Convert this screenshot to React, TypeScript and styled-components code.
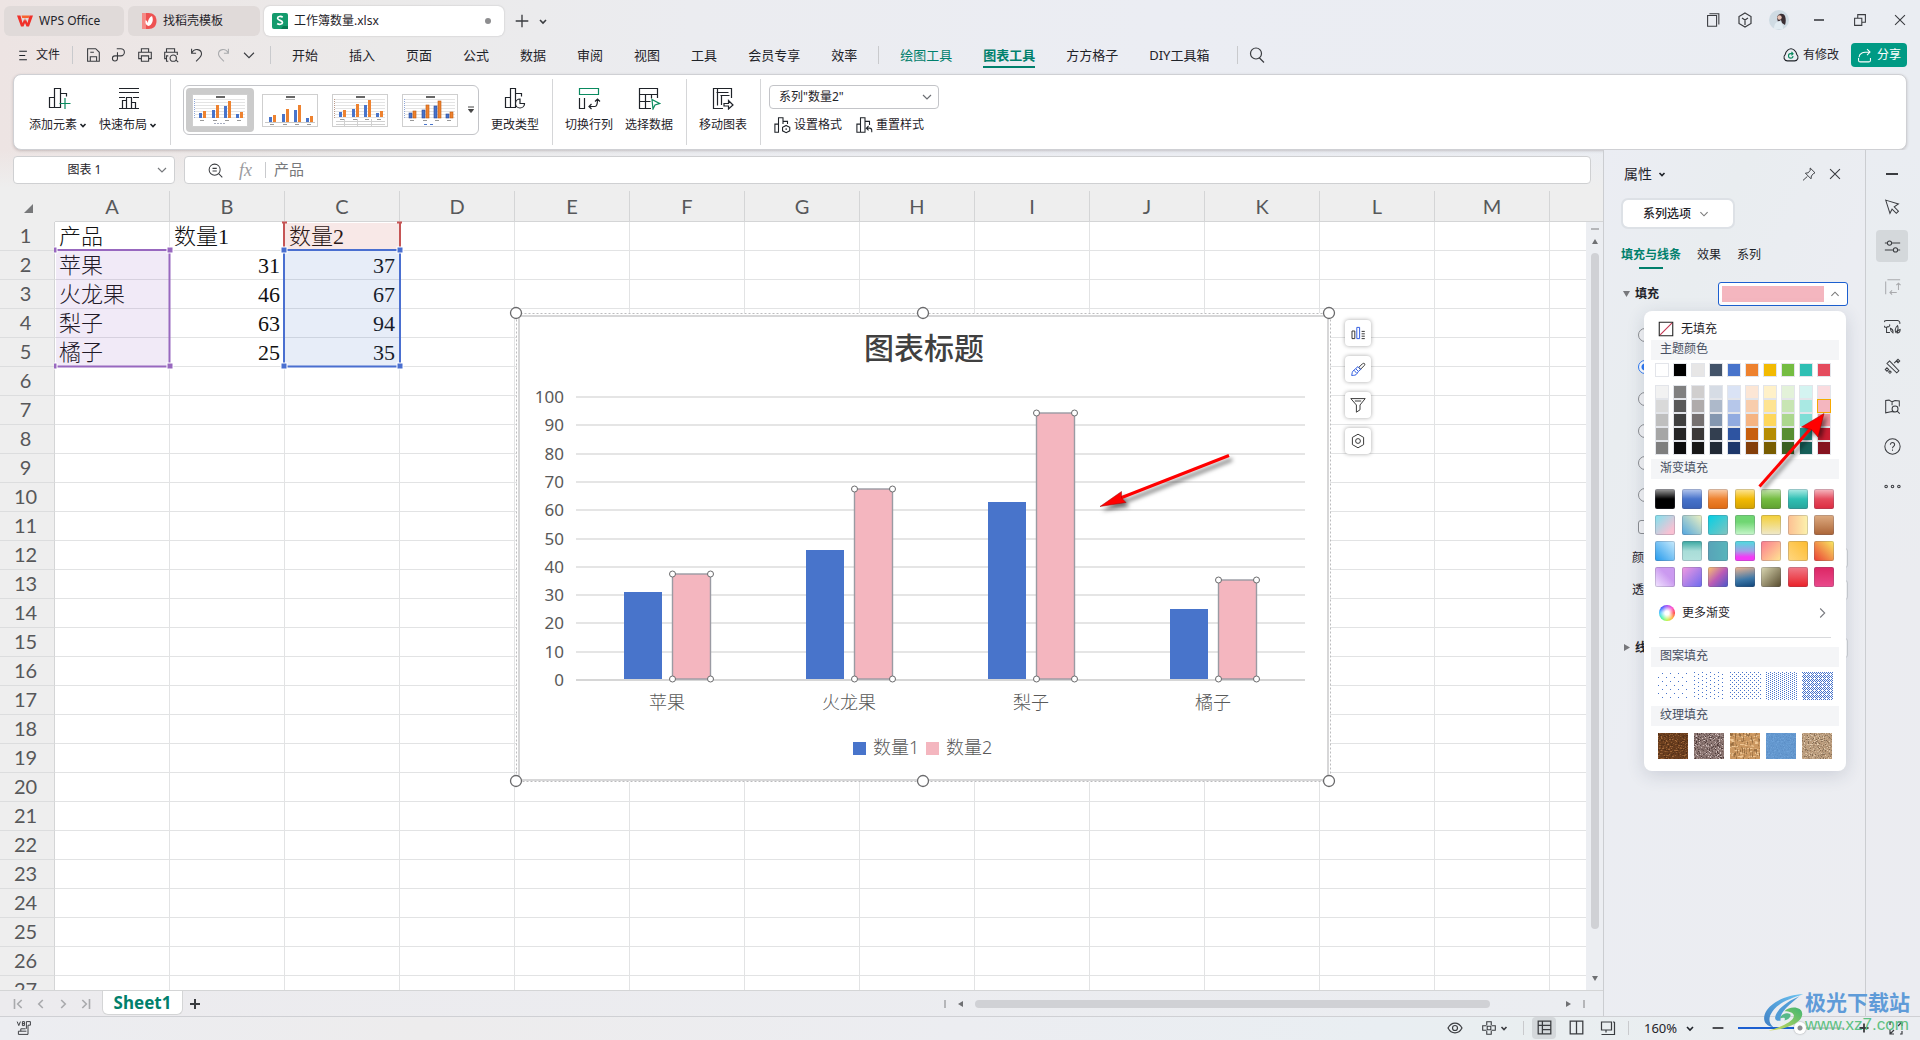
import React from "react";
import styled, { createGlobalStyle, css } from "styled-components";

const Global = createGlobalStyle`
  *, *::before, *::after { box-sizing: border-box; }
  html, body, #root { height: 100%; }
  body {
    margin: 0;
    overflow: hidden;
    font-family: "Noto Sans", "Noto Sans CJK SC", sans-serif;
    font-size: 12px;
    line-height: 18px;
    color: #1f2329;
  }
  button, select, input {
    font: inherit;
    color: inherit;
    margin: 0;
    padding: 0;
    border: 0;
    background: none;
  }
  svg { display: block; flex: none; }
`;

/* ---------- icons ---------- */

const Stroke = styled.svg`
  fill: none;
  stroke: currentColor;
  stroke-width: 1.2;
`;

const shapes: Record<string, React.ReactNode> = {
  burger: <path d="M5 5h9M5 10h7M5 15h9" />,
  save: <path d="M4 3h9l4 4v10H4zM7 17v-5h7v5M7 7h4" />,
  pdf: <path d="M7.500 3H12a4 4 0 0 1 0 8H5.500a2.800 2.800 0 1 0 2.800 2.800V7" />,
  print: <path d="M6 7V3h8v4M6 14H3V7h14v7h-3M6 11h8v6H6z" />,
  preview: <path d="M5 7V3h9v4M5 14H3V7h14v3M7 17H5v-6h2M16 16l2 2M12.500 10a3.500 3.500 0 1 0 0 7 3.500 3.500 0 1 0 0-7z" />,
  undo: <path d="M4 3v5h5M4 8c3-6 11-5 11 1 0 3-3 5-6 8" />,
  redo: <path d="M16 3v5h-5M16 8c-3-6-11-5-11 1 0 3 3 5 6 8" />,
  down: <path d="M6 8l4 4 4-4" />,
  menuDown: <path d="M4.500 7.500l5.500 5.500 5.500-5.500" />,
  up: <path d="M6 12l4-4 4 4" />,
  right: <path d="M8 5l5 5-5 5" />,
  smallDown: <path d="M7 9l3 3 3-3" strokeWidth="1.6" />,
  plus: <path d="M10 3v14M3 10h14" strokeWidth="1.5" />,
  plusSmall: <path d="M10 5v10M5 10h10" strokeWidth="2" />,
  minus: <path d="M5 10h10" strokeWidth="1.6" />,
  minusBold: <path d="M4 10h12" strokeWidth="2" />,
  close: <path d="M4.500 4.500l11 11M15.500 4.500l-11 11" />,
  search: <path d="M9 3a5.500 5.500 0 1 0 0 11 5.500 5.500 0 1 0 0-11zM12.500 13L17 17.500" />,
  zoomOut: <path d="M9 2.500a6.500 6.500 0 1 0 0 13 6.500 6.500 0 1 0 0-13zM13.500 13.500L18 18M6.500 7.500h5M6.500 10.500h5" />,
  windows: <path d="M4 5h10v12H4zM6 3h10.500v12" />,
  cube: <path d="M10 3l6 3.500v7L10 17l-6-3.500v-7zM7 8l3 2 3-2M10 10v5" />,
  restore: <path d="M4 8h8v8H4zM7.500 8V4H16v8.500h-4" />,
  cloud: (
    <>
      <path d="M6 16.500a4 4 0 0 1-2.500-7C4.500 5 8 3 10 3s5.500 2 6.500 6.500a4 4 0 0 1-2.500 7z" />
      <path d="M12 8.500H9.500A2.500 2.500 0 1 0 12.200 11M10.500 6.500l1.800 2-1.800 1.800" stroke="#0a8a5f" />
    </>
  ),
  share: <path d="M3 13v2.500a2 2 0 0 0 2 2h10a2 2 0 0 0 2-2V13M3.500 12C4 7 8 6 16.500 6M13 2.500L16.500 6 13 9.500" />,
  pin: <path d="M11.500 2.500l6 6-2 1-2.500 3-.5 3.500-7-7 3.500-.5 2.500-3zM8 13l-5.500 5" />,
  cursor: <path d="M2 2.500l15 4.500-5 3.500 5 5-2.500 2.500-5-5-2.500 5z" />,
  sliders: <path d="M1 6h3M9 6h10M6.500 3.500a2.500 2.500 0 1 0 0 5 2.500 2.500 0 1 0 0-5zM1 14h10M16 14h3M13.500 11.500a2.500 2.500 0 1 0 0 5 2.500 2.500 0 1 0 0-5z" />,
  convert: <path d="M2 4v15M4 2h15M17 6v8M14.500 8.500L17 6l2.500 2.500M15 17H7M9.500 14.500L7 17l2.500 2.500" />,
  chartImg: <path d="M7 17H3v-6a4 4 0 0 1 0-8h13a3 3 0 0 1 2.500 4M6.500 7.500a2 2 0 0 1-3 2.500M10.500 17.500C8 16 7.500 14 7.500 12c2.500 1 3.500 3 3 5.500zM14 17c-1.500-3-.5-6 2-8 1 3 .5 6-2 8zM15.500 17.500c0-2 1-3.500 3.500-4 0 2.500-1 4-3.500 4z" />,
  wand: <path d="M6.500 3.500L17.500 15 15 17.500 3.500 6.500zM12 6l3-3 1.500 1.500M3.500 11.500l2 2-2 2-2-2zM7 15l1.500 1.500L7 18l-1.500-1.500zM16.500 1.500L18.500 3.500 16.500 5.500 14.500 3.500z" />,
  book: <path d="M9.500 16L2 17.500V3l4-.5 3.500 2L13 3l5 .5V10M9.500 16l2 .5M9.500 4.500v4M13 9.500a3.500 3.500 0 1 0 0 7 3.500 3.500 0 1 0 0-7zM15.500 15.500L18.500 18.500" />,
  help: <path d="M10 1a9 9 0 1 0 0 18 9 9 0 1 0 0-18zM7.500 8c0-3.500 5-3.500 5 0 0 1.800-2.500 2-2.500 4M10 13.500v1.500" />,
  more: <path d="M2.500 8.500a1.500 1.500 0 1 0 0 3 1.500 1.500 0 1 0 0-3zM10 8.500a1.500 1.500 0 1 0 0 3 1.500 1.500 0 1 0 0-3zM17.500 8.500a1.500 1.500 0 1 0 0 3 1.500 1.500 0 1 0 0-3z" />,
  first: <path d="M5 4.500v11M13 5.500L8.500 10l4.500 4.500" strokeWidth="1.8" />,
  prev: <path d="M12 5.500L7.500 10l4.500 4.500" strokeWidth="1.8" />,
  next: <path d="M8 5.500l4.500 4.500L8 14.500" strokeWidth="1.8" />,
  last: <path d="M15 4.500v11M7 5.500l4.500 4.500L7 14.500" strokeWidth="1.8" />,
  eye: <path d="M3 10C6.500 3.500 13.500 3.500 17 10 13.500 16.500 6.500 16.500 3 10zM10 7.500a2.500 2.500 0 1 0 0 5 2.500 2.500 0 1 0 0-5z" />,
  pan: <path d="M7.500 7V3h5v4M7.500 13v4h5v-4M7 7.500H3v5h4M13 7.500h4v5h-4M8 8h4v4H8z" />,
  sheetView: <path d="M4 4h12v12H4zM4 8h12M8 4v12M8 12h8" />,
  pageView: <path d="M4 4h12v12H4zM10 4v12" />,
  layoutView: <path d="M3.500 4h10v8h-10zM16.500 4v12.500h-13M16.500 4H15M8 14.500v-2" />,
  full: <path d="M12 4h4v4M16 4l-4 4M8 16H4v-4M4 16l4-4M4 7V4h2M16 13v3h-2" />,
  barsPanel: (
    <>
      <path d="M2.500 7.500h3.500V17H2.500z" />
      <path d="M8.500 3h3.500v14H8.500z" stroke="#2f5be0" />
      <path d="M14.500 8h4M14.500 11h4M14.500 14h4M14.500 17h4" />
    </>
  ),
  brush: (
    <>
      <path d="M11 8l4.500-4.500c2-1.500 4 0 2.500 2L13 10.500z" />
      <path d="M2 18c1-2 0-5 3-6.500l2-2 3.500 3.500-2 3C7.500 18 5 18 2 18zM7 9.500L10 7l3.500 3.500-3 2.500M5 11.500l3.500 4" stroke="#2f5be0" />
    </>
  ),
  funnel: <path d="M1 2h18l-6.500 8v6l-4.500 3v-9zM6 5h8" />,
  hexagon: <path d="M10 1.500l7 4v9l-7 4-7-4v-9zM10 7a3 3 0 1 0 0 6 3 3 0 1 0 0-6z" />,
  noFill: (
    <>
      <path d="M2.500 2.500h15v15h-15z" stroke="#222" />
      <path d="M3.500 16.500l13-13" stroke="#c2334f" />
    </>
  ),
  vb: <path d="M1.500 2l2 5 2-5M8 2v5h2.500V2zM8 4.500h2.500M13 2h5v4.500h-3V18H3v-4h10M6 14v-3h6M13 2v9" />,
  addElement: (
    <>
      <path d="M2.500 11.500h5v10h-5zM7.500 21.500h6V2.500h-6v9M13.500 7.500h6v3" />
      <path d="M18 12v11M12.500 17.500h11" stroke="#0a8a5f" />
    </>
  ),
  quickLayout: <path d="M2 2.500h20M2 6.500h20M2 11.500h6M16 11.500h6M2 22.500h20M5.500 22.500v-8h4M9.500 22.500v-11h5v11M14.500 16.500h4v6" />,
  changeType: <path d="M2.500 11.500h5v10h-5zM7.500 21.500h5V2.500h-5v9M12.500 7.500h6v3M17 13a4.500 4.500 0 1 0 4.500 4.500H17z" />,
  swap: (
    <>
      <path d="M2.500 2.500h19v6h-19z" stroke="#0a8a5f" />
      <path d="M2.500 12v10.500h5V12M12 20.500h6c2 0 2.500-2 2.500-7.500M14.500 18L12 20.500l2.500 2.500M18 15.500l2.500-2.500 2.500 2.500" />
    </>
  ),
  selectData: (
    <>
      <path d="M20.500 12V2.500h-18v20H14M2.500 8.500h18M8.500 8.500v14M2.500 15.500h11M14.500 8.500v4" />
      <path d="M15 13.500l7.500 4-4.500 1.500-2 4z" stroke="#0a8a5f" />
    </>
  ),
  moveChart: <path d="M12 22.500H2.500v-20h18V12M5.500 6.500h12M6.500 3v16.500M9.500 9.500h9M10.500 9.500V19M13 17.500h4.500v-3l4.500 4.500-4.500 4v-3H13z" />,
  setFormat: <path d="M1 9h4v9H1zM5 18V2h5v7M10 6h5v3M13.500 10.500l4 2v4l-4 2-4-2v-4zM13.500 13.500v2" />,
  resetStyle: <path d="M1 9h4v9H1zM5 18h5V2H5v7M10 6h5v4M12 13.500h3a2.500 2.500 0 0 1 2.500 2.500v2M14 11l-2.500 2.500L14 16" />,
};

function Icon({ name, size = 20, box = 20 }: { name: string; size?: number; box?: number }) {
  return (
    <Stroke width={size} height={size} viewBox={`0 0 ${box} ${box}`} aria-hidden="true">
      {shapes[name]}
    </Stroke>
  );
}

/* ---------- frame ---------- */

const App_ = styled.div`
  height: 100vh;
  display: flex;
  flex-direction: column;
  position: relative;
  overflow: hidden;
  background: linear-gradient(90deg, #ede4e3 0, #ebeaea 20%, #ebecf0 36%, #ebedf3 60%, #eaedf2 100%);
`;

const IconButton = styled.button<{ $w?: number; $h?: number; $faint?: boolean; $active?: boolean }>`
  width: ${(p) => p.$w ?? 26}px;
  height: ${(p) => p.$h ?? 24}px;
  display: flex;
  align-items: center;
  justify-content: center;
  border-radius: 4px;
  color: ${(p) => (p.$faint ? "#a9aaad" : "#3a3c40")};
  background: ${(p) => (p.$active ? "#d4d8db" : "none")};
`;

const Rule = styled.span<{ $h?: number }>`
  width: 1px;
  height: ${(p) => p.$h ?? 18}px;
  background: #c9cacd;
  flex: none;
`;

const Spacer = styled.div`
  flex: 1;
`;

/* ---------- title bar ---------- */

const TitleBar = styled.header`
  display: flex;
  align-items: center;
  gap: 4px;
  height: 36px;
  padding: 6px 0 0 4px;
`;

const DocTab = styled.button<{ $w: number; $active?: boolean }>`
  width: ${(p) => p.$w}px;
  height: 30px;
  padding: 0 13px 0 ${(p) => (p.$active ? 8 : 13)}px;
  display: flex;
  align-items: center;
  gap: 6px;
  border-radius: 6px;
  background: ${(p) => (p.$active ? "#fff" : "#e0dad9")};
  box-shadow: ${(p) => (p.$active ? "0 0 2px #b9b9bb" : "none")};
`;

const Dot = styled.span`
  width: 6px;
  height: 6px;
  border-radius: 50%;
  background: #8d8d8f;
  margin-left: auto;
`;

const WindowTools = styled.div`
  display: flex;
  align-items: center;
  padding-bottom: 2px;
`;

/* ---------- menu row ---------- */

const MenuRow = styled.nav`
  display: flex;
  align-items: center;
  height: 38px;
  padding: 0 13px 0 15px;
`;

const FileButton = styled.button`
  display: flex;
  align-items: center;
  gap: 4px;
  width: 57px;
`;

const QuickTools = styled.div`
  display: flex;
  padding: 0 8px 0 7px;
`;

const MenuItems = styled.div<{ $end: number }>`
  display: flex;
  align-items: center;
  gap: 31px;
  padding: 0 ${(p) => p.$end}px 0 21px;
`;

const MenuItem = styled.button<{ $tone?: "green" | "current" }>`
  font-size: 13px;
  line-height: 22px;
  white-space: nowrap;
  border-top: 2px solid transparent;
  border-bottom: 2px solid transparent;
  ${(p) => p.$tone && css`color: #00806c;`}
  ${(p) => p.$tone === "current" && css`
    font-weight: 700;
    border-bottom-color: #00806c;
  `}
`;

const Unsaved = styled.button`
  display: flex;
  align-items: center;
  gap: 3px;
  margin-right: 12px;
`;

const ShareButton = styled.button`
  display: flex;
  align-items: center;
  gap: 4px;
  height: 24px;
  padding: 0 6px 0 5px;
  border-radius: 4px;
  background: #009a84;
  color: #fff;
`;

/* ---------- ribbon ---------- */

const Ribbon = styled.section`
  display: flex;
  align-items: stretch;
  height: 76px;
  margin: 0 13px;
  padding: 4px 0;
  background: #fff;
  border: 1px solid #cfd0d4;
  border-radius: 8px;
  box-shadow: 0 1px 3px rgba(60, 40, 40, 0.22);
`;

const Group = styled.div<{ $pad?: string; $gap?: number }>`
  display: flex;
  gap: ${(p) => p.$gap ?? 12}px;
  padding: ${(p) => p.$pad ?? "0 13px 0 12px"};
  & + & {
    border-left: 1px solid #d5d6d8;
  }
`;

const BigButton = styled.button`
  display: flex;
  flex-direction: column;
  align-items: center;
  gap: 6px;
  padding-top: 7px;
  white-space: nowrap;
`;

const WithArrow = styled.span`
  display: flex;
  align-items: center;
`;

const Caret = () => (
  <Stroke width="12" height="8" viewBox="0 0 12 8" aria-hidden="true">
    <path d="M3.500 3L6 5.500 8.500 3" strokeWidth="1.600" />
  </Stroke>
);

const Gallery = styled.div`
  display: flex;
  align-items: center;
  gap: 2px;
  width: 296px;
  height: 50px;
  margin-top: 6px;
  padding: 0 2px;
  border: 1px solid #c3c4c8;
  border-radius: 6px;
`;

const ThumbButton = styled.button<{ $active?: boolean }>`
  width: 68px;
  height: 44px;
  display: grid;
  place-items: center;
  border-radius: 4px;
  background: ${(p) => (p.$active ? "#cbcbcb" : "none")};
`;

const SeriesTools = styled.div`
  display: flex;
  flex-direction: column;
  gap: 7px;
  padding-top: 6px;
`;

const SelectBox = styled.label`
  position: relative;
  display: block;
  color: #6b6e73;
  svg {
    position: absolute;
    right: 2px;
    top: 2px;
    pointer-events: none;
  }
`;

const SeriesSelect = styled.select`
  appearance: none;
  width: 170px;
  height: 24px;
  padding: 0 24px 0 9px;
  border: 1px solid #c3c4c8;
  border-radius: 4px;
  background: #fff;
  color: #1f2329;
`;

const SmallTools = styled.div`
  display: flex;
  gap: 14px;
`;

const SmallTool = styled.button`
  display: flex;
  align-items: center;
  gap: 2px;
  height: 18px;
  line-height: 18px;
  padding-left: 5px;
  & + & {
    padding-left: 0;
  }
`;

/* ---------- workspace ---------- */

const Workspace = styled.div`
  flex: 1;
  min-height: 0;
  display: flex;
`;

const SheetColumn = styled.main`
  flex: 1;
  min-width: 0;
  display: flex;
  flex-direction: column;
  background: linear-gradient(180deg, rgba(238, 238, 238, 0) 0, #eee 38px);
`;

const FormulaRow = styled.div`
  display: flex;
  gap: 9px;
  padding: 6px 12px 7px 13px;
`;

const fieldFrame = css`
  height: 28px;
  border: 1px solid #cfd0d2;
  border-radius: 4px;
  background: #fff;
`;

const NameBox = styled.label`
  ${fieldFrame}
  width: 162px;
  display: flex;
  align-items: center;
  padding-right: 2px;
  color: #77797d;
`;

const NameInput = styled.input`
  flex: 1;
  min-width: 0;
  padding-left: 3px;
  text-align: center;
  font-size: 12px;
  color: #1f2329;
  outline: 0;
`;

const FormulaBox = styled.div`
  ${fieldFrame}
  flex: 1;
  display: flex;
  align-items: center;
  padding-left: 19px;
`;

const Fx = styled.span`
  width: 29px;
  text-align: center;
  margin: 0 5px;
  font: italic 18px "Liberation Serif", serif;
  color: #9b9b9e;
`;

const FormulaInput = styled.input`
  flex: 1;
  padding: 0 0 3px 8px;
  font-size: 15px;
  line-height: 22px;
  color: #77787b;
  outline: 0;
`;

const GridArea = styled.div`
  flex: 1;
  min-height: 0;
  display: flex;
`;

const GridViewport = styled.div`
  flex: 1;
  min-width: 0;
  position: relative;
  overflow: hidden;
  background: #fff;
`;

const Sheet = styled.table`
  table-layout: fixed;
  width: 1665px;
  border-collapse: separate;
  border-spacing: 0;
  background: #fff;
`;

const ColHead = styled.th`
  height: 31px;
  padding: 0;
  background: #eee;
  border-right: 1px solid #d4d5d6;
  border-bottom: 1px solid #d4d5d6;
  font: 400 20px/28px Lato, sans-serif;
  color: #57585a;
`;

const CornerHead = styled.th`
  height: 31px;
  padding: 4px 0 0;
  width: 55px;
  background: #eee;
  border-bottom: 1px solid #eee;
  svg {
    margin-left: 24px;
  }
`;

const RowHead = styled.th`
  height: 29px;
  padding: 0 3px 2px 0;
  background: #eee;
  border-right: 1px solid #d4d5d6;
  border-bottom: 1px solid #dcddde;
  font: 400 20px/26px Lato, sans-serif;
  color: #57585a;
`;

const Cell = styled.td<{ $num?: boolean }>`
  height: 29px;
  padding: 2px 4px 0;
  border-right: 1px solid #e2e3e4;
  border-bottom: 1px solid #e2e3e4;
  font: 22px/26px "Liberation Serif", "Noto Sans CJK SC", serif;
  font-weight: 300;
  color: #111;
  text-align: ${(p) => (p.$num ? "right" : "left")};
  white-space: nowrap;
`;

/* Reference ranges of the chart, laid over the cells. */
const RangeLayer = styled.svg`
  position: absolute;
  left: 54px;
  top: 28px;
`;

const ChartLayer = styled.svg`
  position: absolute;
  left: 508px;
  top: 114px;
`;

const ChartText = styled.text<{ $size: number; $digits?: boolean; $title?: boolean }>`
  font-family: "Noto Sans", "Noto Sans CJK SC", sans-serif;
  font-size: ${(p) => p.$size}px;
  font-weight: ${(p) => (p.$title ? 500 : p.$digits ? 400 : 300)};
  fill: ${(p) => (p.$title ? "#404040" : "#595959")};
`;

const ChartTools = styled.div`
  position: absolute;
  left: 1345px;
  top: 129px;
  display: flex;
  flex-direction: column;
  gap: 10px;
`;

const ChartTool = styled.button`
  width: 26px;
  height: 26px;
  display: grid;
  place-items: center;
  border-radius: 4px;
  background: #fff;
  color: #333;
  box-shadow: 0 0 4px rgba(0, 0, 0, 0.35);
`;

const VScroll = styled.div`
  width: 17px;
  display: flex;
  flex-direction: column;
  align-items: center;
  padding-bottom: 9px;
  background: #eceef2;
`;

const VScrollHead = styled.div`
  align-self: stretch;
  height: 31px;
  background: #eee;
  border-bottom: 1px solid #d4d5d6;
`;

const Tick = styled.span<{ $vertical?: boolean }>`
  width: ${(p) => (p.$vertical ? 2 : 8)}px;
  height: ${(p) => (p.$vertical ? 8 : 2)}px;
  background: #b5b6b9;
  margin: ${(p) => (p.$vertical ? "0" : "6px 0 9px")};
`;

const Arrow = styled.span<{ $dir: "up" | "down" | "left" | "right" }>`
  width: 0;
  height: 0;
  border: 3px solid transparent;
  ${(p) => p.$dir === "up" && css`border-top: 0; border-bottom: 5px solid #6f7073;`}
  ${(p) => p.$dir === "down" && css`border-bottom: 0; border-top: 5px solid #6f7073;`}
  ${(p) => p.$dir === "left" && css`border-left: 0; border-right: 5px solid #6f7073;`}
  ${(p) => p.$dir === "right" && css`border-right: 0; border-left: 5px solid #6f7073;`}
`;

const VThumb = styled.div`
  width: 8px;
  flex: 1;
  margin: 9px 0 47px;
  border-radius: 4px;
  background: #d0d1d5;
`;

const SheetBar = styled.div`
  height: 26px;
  display: flex;
  align-items: center;
  background: linear-gradient(90deg, #ecebee, #ebedf1);
  border-top: 1px solid #d4d5d6;
`;

const SheetNav = styled.div`
  display: flex;
  width: 102px;
  padding-left: 8px;
`;

const SheetTab = styled.button`
  align-self: flex-start;
  width: 81px;
  height: 24px;
  background: #fff;
  border: 1px solid #d4d5d6;
  border-top: 0;
  border-radius: 0 0 6px 6px;
  font-size: 17px;
  line-height: 22px;
  font-weight: 700;
  color: #00806c;
`;

const HScroll = styled.div`
  display: flex;
  align-items: center;
  width: 659px;
  padding-right: 18px;
  gap: 12px;
`;

const HThumb = styled.div`
  width: 515px;
  height: 8px;
  margin-right: auto;
  border-radius: 4px;
  background: #d0d1d5;
`;

/* ---------- property panel ---------- */

const Panel = styled.aside`
  position: relative;
  width: 262px;
  padding: 14px 17px 0;
  border-left: 1px solid #cbcdd1;
  background: linear-gradient(115deg, #ebedf3 0, #e9edf0 22%, #ebedf2 45%, #ecedf1 100%);
`;

const PanelHead = styled.div`
  display: flex;
  align-items: center;
  height: 20px;
  padding: 0 0 0 3px;
  font-size: 14px;
`;

const PanelTitle = styled.button`
  display: flex;
  align-items: center;
  gap: 4px;
`;

const OptionsButton = styled.button`
  display: flex;
  align-items: center;
  justify-content: center;
  gap: 4px;
  width: 114px;
  height: 31px;
  margin-top: 14px;
  border: 2px solid #dde1e6;
  border-radius: 7px;
  background: #fff;
  background-clip: padding-box;
  font-weight: 500;
  svg {
    color: #777;
  }
`;

const PanelTabs = styled.div`
  display: flex;
  gap: 16px;
  margin-top: 17px;
`;

const PanelTab = styled.button<{ $active?: boolean }>`
  display: flex;
  flex-direction: column;
  align-items: center;
  height: 23px;
  gap: 3px;
  ${(p) => p.$active && css`
    color: #00806c;
    font-weight: 700;
    &::after {
      content: "";
      width: 24px;
      height: 2px;
      background: #00806c;
    }
  `}
`;

const SectionRow = styled.div`
  display: flex;
  align-items: center;
  height: 24px;
  margin-top: 13px;
  font-weight: 700;
`;

const SectionToggle = styled.button`
  display: flex;
  align-items: center;
  gap: 4px;
  padding-left: 2px;
  font-weight: 700;
`;

const ColorField = styled.button`
  display: flex;
  align-items: center;
  width: 130px;
  height: 24px;
  padding-left: 3px;
  border: 1px solid #1c5fd0;
  border-radius: 3px;
  background: #fff;
  color: #777;
`;

const ColorChip = styled.span`
  width: 102px;
  height: 16px;
  margin-right: 2px;
  background: #f4b6bf;
`;

const Options = styled.div`
  display: flex;
  flex-direction: column;
  gap: 18px;
  padding: 22px 0 2px 17px;
`;

const Choice = styled.input<{ $round?: boolean }>`
  appearance: none;
  width: 14px;
  height: 14px;
  border: 1px solid #8c8e92;
  border-radius: ${(p) => (p.$round ? "50%" : "3px")};
  background: #f3f4f6;
  &:checked {
    border-color: #2f7bf5;
    background: radial-gradient(circle, #2f7bf5 0 3px, #fff 4px);
  }
`;

const FieldLine = styled.label`
  display: flex;
  align-items: center;
  justify-content: space-between;
  height: 20px;
  margin-top: 12px;
  padding: 0 0 0 11px;
`;

const FieldInput = styled.input`
  width: 80px;
  height: 20px;
  border: 1px solid #cfd2d6;
  border-radius: 3px;
  background: #fff;
`;

const LineSection = styled(SectionRow)`
  margin-top: 36px;
  justify-content: space-between;
`;

const Popup = styled.div`
  position: absolute;
  top: 161px;
  right: 19px;
  width: 202px;
  height: 460px;
  border-radius: 8px;
  background: #fff;
  box-shadow: 0 4px 18px rgba(40, 50, 80, 0.16);
`;

const NoFill = styled.button`
  display: flex;
  align-items: center;
  gap: 6px;
  height: 29px;
  padding: 6px 0 0 13px;
`;

const Band = styled.h3`
  height: 20px;
  margin: 0 7px;
  padding-left: 9px;
  font-size: 12px;
  line-height: 18px;
  font-weight: 400;
  color: #474f61;
  background: #f4f5f7;
`;

const Swatches = styled.div`
  display: grid;
  grid-template-columns: repeat(10, 14px);
  column-gap: 4px;
  padding: 3px 11px 0;
  & + & {
    padding: 8px 11px 4px;
  }
`;

const Swatch = styled.button<{ $c: string; $on?: boolean }>`
  width: 14px;
  height: 14px;
  border: 1px solid ${(p) => (p.$on ? "#f7a900" : "#e3e5ea")};
  background: ${(p) => p.$c};
`;

const Gradients = styled.div`
  display: grid;
  grid-template-columns: repeat(7, 20px);
  justify-content: space-between;
  row-gap: 6px;
  padding: 10px 12px 0 11px;
`;

const GradientSwatch = styled.button<{ $g: string }>`
  width: 20px;
  height: 20px;
  border: 1px solid rgba(90, 90, 110, 0.25);
  border-radius: 2px;
  background: ${(p) => p.$g};
  background-origin: border-box;
`;

const MoreRow = styled.button`
  display: flex;
  align-items: center;
  width: 172px;
  height: 50px;
  margin: 1px 15px 9px;
  border-bottom: 1px solid #d8d9dc;
  gap: 7px;
  svg {
    margin-left: auto;
    color: #77797e;
  }
`;

const Wheel = styled.span`
  width: 16px;
  height: 16px;
  border-radius: 50%;
  background: radial-gradient(circle, #fff 0 2px, rgba(255, 255, 255, 0) 8px),
    conic-gradient(#a03cf5, #ff3cc8, #ff3030, #ffb030, #b8f53c, #3cf5a0, #3cc8ff, #3050ff, #a03cf5);
`;

const Tiles = styled.div<{ $tall?: boolean }>`
  display: flex;
  gap: 6px;
  padding: ${(p) => (p.$tall ? "5px 14px 6px" : "7px 14px 0")};
`;

const Tile = styled.button`
  width: 30px;
`;

/* ---------- side rail ---------- */

const Rail = styled.div`
  width: 55px;
  padding: 16px 0 0 10px;
  border-left: 1px solid #cbcdd1;
  display: flex;
  flex-direction: column;
  gap: 8px;
  background: linear-gradient(180deg, #eaedf2 0, #e9edf0 15%, #ebecf0 50%, #ebecf1 100%);
`;

/* ---------- status bar ---------- */

const StatusBar = styled.footer`
  height: 24px;
  display: flex;
  align-items: center;
  padding: 0 12px 2px;
  border-top: 1px solid #cfd0d4;
  background: linear-gradient(90deg, #ecedf1 0, #edeced 22%, #ecedf1 50%, #e9eef2 72%, #e9eef0 80%, #ebedf1 100%);
`;

const StatusGroup = styled.div<{ $gap: number; $pad: number }>`
  display: flex;
  align-items: center;
  gap: ${(p) => p.$gap}px;
  padding-left: ${(p) => p.$pad}px;
`;

const ZoomBox = styled.label`
  position: relative;
  display: block;
  svg {
    position: absolute;
    right: -2px;
    top: 1px;
    pointer-events: none;
  }
`;

const ZoomSelect = styled.select`
  appearance: none;
  width: 54px;
  height: 22px;
  font-size: 13px;
`;

const ZoomRange = styled.input`
  appearance: none;
  width: 106px;
  height: 12px;
  background: linear-gradient(90deg, #1c5fd0 0 58%, #c4c6ca 58%) center / 100% 2px no-repeat;
  &::-webkit-slider-thumb {
    appearance: none;
    width: 12px;
    height: 12px;
    border-radius: 50%;
    background: radial-gradient(circle, #8c8e91 0 2px, #fff 3px);
    box-shadow: 0 0 2px rgba(0, 0, 0, 0.4);
  }
`;

const Watermark = styled.div`
  position: absolute;
  right: 10px;
  bottom: 4px;
  display: flex;
  align-items: center;
  pointer-events: none;
`;

const WatermarkText = styled.div`
  font-weight: 700;
  font-size: 21px;
  line-height: 24px;
  color: #5f9bd8;
  p {
    margin: 0;
  }
  p + p {
    font: 400 17px/22px "Liberation Sans", sans-serif;
    color: #5fc183;
  }
`;

const PointerLayer = styled.svg`
  position: absolute;
  right: 15px;
  top: 256px;
  pointer-events: none;
`;

/* ---------- data ---------- */

const columns = "ABCDEFGHIJKLM".split("");
const table: (string | number)[][] = [
  ["产品", "数量1", "数量2"],
  ["苹果", 31, 37],
  ["火龙果", 46, 67],
  ["梨子", 63, 94],
  ["橘子", 25, 35],
];

const themeColors = ["#ffffff", "#000000", "#e7e6e6", "#44546a", "#4874cb", "#ee822f", "#f2ba02", "#75bd42", "#30c0b4", "#e54c5e"];
const tints = [
  ["#f2f2f2", "#808080", "#d0cece", "#d6dce5", "#dae3f5", "#fce6d5", "#fff1c9", "#e3f2d9", "#d4f4f1", "#fadbdf"],
  ["#d9d9d9", "#595959", "#afabab", "#adb9ca", "#b6c7ea", "#f8cdac", "#fee492", "#c8e5b3", "#a9e9e3", "#f4b6bf"],
  ["#bfbfbf", "#404040", "#767171", "#8497b0", "#91abe0", "#f5b482", "#fed75c", "#acd78e", "#7eded6", "#ef949e"],
  ["#a6a6a6", "#262626", "#3b3838", "#333f50", "#2e54a1", "#c75f0e", "#b68c02", "#588e31", "#249087", "#c81d31"],
  ["#7f7f7f", "#0d0d0d", "#181717", "#222a35", "#1e386b", "#843f0a", "#795d01", "#3a5f21", "#18605a", "#861320"],
];

const gradients = [
  "linear-gradient(#a0a0a0, #000 50%)",
  "linear-gradient(#b7c9ee, #4874cb 50%, #3a62b6)",
  "linear-gradient(#fad0ae, #ee822f 50%, #de6a12)",
  "linear-gradient(#fde79c, #f2ba02 50%, #d2a202)",
  "linear-gradient(#c8e6b3, #75bd42 50%, #5fa030)",
  "linear-gradient(#b0ece6, #30c0b4 50%, #28a49a)",
  "linear-gradient(#f6bcc4, #e54c5e 50%, #dc2b40)",
  "linear-gradient(135deg, #7de3ef, #f9c1d3 80%)",
  "linear-gradient(45deg, #4fa5e0, #f2f3c0)",
  "linear-gradient(135deg, #00d0e6, #86c3bd)",
  "linear-gradient(#70d673 35%, #c9f7cd)",
  "linear-gradient(#f4cf35, #efe9cd)",
  "linear-gradient(90deg, #fcbf92, #fcf3ad)",
  "linear-gradient(#deac82, #ab6436)",
  "linear-gradient(45deg, #2299ec, #ccecfc)",
  "linear-gradient(#37a7a0, #a9ddd8 50%, #b4e2de)",
  "linear-gradient(90deg, #58a3b8, #58b5bb)",
  "linear-gradient(#4bdddf, #a4a0e6 50%, #f43af6 80%)",
  "linear-gradient(135deg, #fb7a8e, #ffe793)",
  "linear-gradient(45deg, #ffd782, #fdbb2d)",
  "linear-gradient(45deg, #ea3c34, #f9ec62)",
  "linear-gradient(45deg, #f2e6ff, #cb9af0 60%)",
  "linear-gradient(135deg, #f49ae0, #6a6af0)",
  "linear-gradient(135deg, #fbc76b, #bb5cb6 50%, #4657ca)",
  "linear-gradient(170deg, #f5b791, #3d78a8 60%, #0f4478)",
  "linear-gradient(135deg, #dcd9b4, #55492c)",
  "linear-gradient(#ef7c8a, #ea1f27)",
  "linear-gradient(#dc2664, #ea4a8c)",
];

const dotPatterns: { w: number; h: number; dots: number[][] }[] = [
  { w: 8, h: 8, dots: [[4, 1], [0, 5]] },
  { w: 8, h: 4, dots: [[0, 0], [4, 2]] },
  { w: 4, h: 4, dots: [[0, 0], [2, 2]] },
  { w: 4, h: 2, dots: [[0, 0], [2, 1]] },
  { w: 4, h: 4, dots: [[0, 0], [2, 0], [1, 1], [3, 1], [2, 2], [1, 3], [3, 3]] },
];

const textures = [
  { base: "#6b3e1e", dark: "#4a2a14", light: "#a36b3c", fx: "0.6 0.8" },
  { base: "#8a7470", dark: "#3c2c2c", light: "#d6c6c4", fx: "0.9" },
  { base: "#cb9760", dark: "#8a6238", light: "#f0c896", fx: "0.9 0.2" },
  { base: "#6498cf", dark: "#5a8cc4", light: "#70a4da", fx: "0.7" },
  { base: "#bb9c7c", dark: "#4a3828", light: "#e4cdb0", fx: "0.8" },
];

/* ---------- parts ---------- */

const thumbBars = [[7, 5, 7], [20, 8, 13], [32, 12, 17], [44, 4, 6]];

function Thumb({ kind }: { kind: number }) {
  const base = kind === 1 ? 28 : kind === 2 ? 23 : 24;
  return (
    <svg width="56" height="33" viewBox="0 0 56 33" aria-hidden="true">
      <rect x="0.5" y="0.500" width="55" height="32" fill="#fff" stroke="#cfcfcf" />
      <rect x="24" y="2" width="9" height="2" fill="#666" />
      {kind === 1 && <rect x="23" y="5" width="10" height="1" fill="#bbb" />}
      {kind !== 1 && [5, 8, 11, 14, 17, 20, 23].map((y) => <path key={y} d={`M3 ${y}.5H53`} stroke="#e4e4e4" />)}
      {kind !== 1 && <path d="M2.500 5V24" stroke={kind === 2 ? "#b98" : "#8fa6d8"} strokeDasharray="1 1" />}
      {kind === 1 && <path d="M3 28.500H53" stroke="#c8c8c8" />}
      {thumbBars.map(([x, a, b]) => (
        <g key={x}>
          <rect x={x} y={base - a} width="3" height={a} fill="#4874cb" stroke={kind === 3 ? "#27479a" : "none"} strokeWidth="0.6" />
          <rect x={x + 4} y={base - b} width="3" height={b} fill="#ee822f" stroke={kind === 3 ? "#c0590c" : "none"} strokeWidth="0.6" />
          <rect x={x + 1} y={base + 2} width="4" height="1" fill="#999" />
        </g>
      ))}
      {kind === 2 && <path d="M4 27.500H53M4 30.500H53M12.500 25V32M25.500 25V32M39.500 25V32" stroke="#d0d0d0" />}
      {kind === 0 && <path d="M22 29.500h12" stroke="#a8aec0" strokeDasharray="2 1" />}
      {kind === 3 && <path d="M22 30.500h3M28 30.500h3" stroke="#4874cb" />}
    </svg>
  );
}

const valueToY = (v: number) => 680 - v * 2.83;

function Handle({ x, y, r }: { x: number; y: number; r: number }) {
  return <circle cx={x} cy={y} r={r} fill="#fff" stroke="#6a6a6c" strokeWidth={r > 3 ? 1.3 : 1} />;
}

function Chart() {
  const rows = table.slice(1) as [string, number, number][];
  return (
    <ChartLayer width="830" height="485" viewBox="508 305 830 485" role="img" aria-label="图表标题">
      <rect x="517" y="313" width="813" height="469" fill="#fff" />
      <rect x="519" y="316" width="809" height="464" fill="#fff" stroke="#d7d7d8" strokeWidth="2" />
      <rect x="516.5" y="313.500" width="814" height="468" fill="none" stroke="#bcbcbe" strokeDasharray="2 2" />
      <ChartText $size={30} $title x="924" y="359" textAnchor="middle">图表标题</ChartText>
      {Array.from({ length: 11 }, (_, i) => i * 10).map((v) => (
        <g key={v}>
          <path d={`M576 ${Math.round(valueToY(v))}H1305`} stroke={v ? "#e5e5e5" : "#d6d6d6"} strokeWidth="2" />
          <ChartText $size={17} $digits x="564" y={Math.round(valueToY(v)) + 6} textAnchor="end">{v}</ChartText>
        </g>
      ))}
      {rows.map(([name, a, b], i) => {
        const x = 624 + i * 182;
        const top = Math.round(valueToY(b)) - 1;
        const topA = Math.round(valueToY(a));
        return (
          <g key={name}>
            <rect x={x} y={topA} width="38" height={679 - topA} fill="#4874cb" />
            <rect x={x + 48.5} y={top} width="38" height={679 - top} fill="#f4b6bf" stroke="#9a9ba3" strokeWidth="1.400" />
            {[[0, top], [38, top], [0, 679], [38, 679]].map(([dx, y]) => (
              <Handle key={`${dx}-${y}`} x={x + 48.5 + dx} y={y} r={3} />
            ))}
            <ChartText $size={18} x={x + 43} y="709" textAnchor="middle">{name}</ChartText>
          </g>
        );
      })}
      <rect x="853" y="742" width="13" height="13" fill="#4874cb" />
      <ChartText $size={18} x="873" y="754">数量1</ChartText>
      <rect x="926" y="742" width="13" height="13" fill="#f4b6bf" />
      <ChartText $size={18} x="946" y="754">数量2</ChartText>
      {[[516, 313], [923, 313], [1329, 313], [516, 781], [923, 781], [1329, 781]].map(([x, y]) => (
        <Handle key={`${x}-${y}`} x={x} y={y} r={5.5} />
      ))}
      <g style={{ filter: "drop-shadow(3px 4px 2px rgba(0,0,0,0.55))" }}>
        <path d="M1229 455.500L1118 499" stroke="#f00" strokeWidth="3" />
        <path d="M1100 506.500L1121.500 491.500L1121.500 498L1126 502.500Z" fill="#f00" stroke="#9b0000" strokeWidth="0.5" />
      </g>
    </ChartLayer>
  );
}

function Ranges() {
  return (
    <RangeLayer width="352" height="156" viewBox="54 219 352 156" aria-hidden="true">
      <rect x="56" y="251" width="114" height="115" fill="rgba(150,90,190,0.13)" />
      <rect x="285" y="223" width="114" height="27" fill="rgba(200,80,70,0.13)" />
      <rect x="285" y="251" width="114" height="115" fill="rgba(72,116,203,0.13)" />
      <path d="M54 250H169.500V366.500H54" fill="none" stroke="#9868bf" strokeWidth="2" />
      <path d="M284 223V249M400 223V249" stroke="#c65555" strokeWidth="2" />
      <path d="M282 222.500h5M397 222.500h5" stroke="#c65555" strokeWidth="2" />
      <path d="M284 250H400V366.500H284z" fill="none" stroke="#4a6fd0" strokeWidth="2" />
      {[[170, 250, "#9868bf"], [170, 366, "#9868bf"], [54, 250, "#9868bf"], [54, 366, "#9868bf"], [284, 250, "#4a6fd0"], [400, 250, "#4a6fd0"], [284, 366, "#4a6fd0"], [400, 366, "#4a6fd0"]].map(([x, y, c]) => (
        <rect key={`${x}-${y}`} x={Number(x) - 3} y={Number(y) - 3} width="6" height="6" fill={String(c)} stroke="#fff" strokeWidth="1" />
      ))}
    </RangeLayer>
  );
}

function FillPopup() {
  return (
    <Popup role="dialog" aria-label="填充">
      <NoFill><Icon name="noFill" size={18} />无填充</NoFill>
      <Band>主题颜色</Band>
      <Swatches>
        {themeColors.map((c) => <Swatch key={c} $c={c} aria-label={c} />)}
      </Swatches>
      <Swatches>
        {tints.flat().map((c, i) => <Swatch key={i} $c={c} $on={i === 19} aria-label={c} />)}
      </Swatches>
      <Band>渐变填充</Band>
      <Gradients>
        {gradients.map((g) => <GradientSwatch key={g} $g={g} aria-label="渐变" />)}
      </Gradients>
      <MoreRow><Wheel />更多渐变<Icon name="right" size={18} /></MoreRow>
      <Band>图案填充</Band>
      <Tiles $tall>
        {dotPatterns.map((p, i) => (
          <Tile key={i} aria-label="图案">
            <svg width="31" height="28" shapeRendering="crispEdges" aria-hidden="true">
              <pattern id={`dots${i}`} width={p.w} height={p.h} patternUnits="userSpaceOnUse">
                {p.dots.map(([x, y]) => <rect key={`${x}-${y}`} x={x} y={y} width="1" height="1" fill="#4874cb" />)}
              </pattern>
              <rect width="31" height="28" fill={`url(#dots${i})`} />
            </svg>
          </Tile>
        ))}
      </Tiles>
      <Band>纹理填充</Band>
      <Tiles>
        {textures.map((t, i) => (
          <Tile key={i} aria-label="纹理">
            <svg width="30" height="26" aria-hidden="true">
              <filter id={`dark${i}`} x="0" y="0" width="100%" height="100%">
                <feTurbulence type="fractalNoise" baseFrequency={t.fx} numOctaves="2" seed={i + 3} />
                <feColorMatrix values="0 0 0 0 0  0 0 0 0 0  0 0 0 0 0  6 0 0 0 -3.200" />
                <feComposite in="SourceGraphic" operator="in" />
              </filter>
              <filter id={`light${i}`} x="0" y="0" width="100%" height="100%">
                <feTurbulence type="fractalNoise" baseFrequency={i === 2 ? "0.2 0.9" : t.fx} numOctaves="2" seed={i + 20} />
                <feColorMatrix values="0 0 0 0 0  0 0 0 0 0  0 0 0 0 0  6 0 0 0 -3.200" />
                <feComposite in="SourceGraphic" operator="in" />
              </filter>
              <rect width="30" height="26" fill={t.base} />
              <rect width="30" height="26" fill={t.light} filter={`url(#light${i})`} />
              <rect width="30" height="26" fill={t.dark} filter={`url(#dark${i})`} opacity={i === 4 ? 0.5 : 0.8} />
            </svg>
          </Tile>
        ))}
      </Tiles>
    </Popup>
  );
}

function PropertyPanel() {
  return (
    <Panel>
      <PanelHead>
        <PanelTitle>属性<Caret /></PanelTitle>
        <Spacer />
        <IconButton aria-label="固定"><Icon name="pin" size={16} /></IconButton>
        <IconButton aria-label="关闭"><Icon name="close" size={18} /></IconButton>
      </PanelHead>
      <OptionsButton>系列选项<Icon name="down" size={18} /></OptionsButton>
      <PanelTabs>
        <PanelTab $active>填充与线条</PanelTab>
        <PanelTab>效果</PanelTab>
        <PanelTab>系列</PanelTab>
      </PanelTabs>
      <SectionRow>
        <SectionToggle>
          <svg width="8" height="8" aria-hidden="true"><path d="M0 1h7L3.500 7z" fill="#77787c" /></svg>
          填充
        </SectionToggle>
        <Spacer />
        <ColorField aria-label="填充颜色"><ColorChip /><Icon name="up" size={18} /></ColorField>
      </SectionRow>
      <Options>
        {["无填充", "纯色填充", "渐变填充", "图片或纹理填充", "图案填充", "自动"].map((o, i) => (
          <Choice key={o} type="radio" name="fill" aria-label={o} $round defaultChecked={i === 1} />
        ))}
        <Choice type="checkbox" aria-label="以互补色代表负值" />
      </Options>
      <FieldLine>颜色<FieldInput /></FieldLine>
      <FieldLine>透明度<FieldInput /></FieldLine>
      <LineSection>
        <SectionToggle>
          <svg width="8" height="8" aria-hidden="true"><path d="M1 0v7L7 3.500z" fill="#77787c" /></svg>
          线条
        </SectionToggle>
        <FieldInput aria-label="线条" />
      </LineSection>
      <FillPopup />
      <PointerLayer width="90" height="90" viewBox="1760 406 90 90" overflow="visible" aria-hidden="true">
        <g style={{ filter: "drop-shadow(3px 3px 2px rgba(0,0,0,0.5))" }}>
          <path d="M1759.500 486.500L1812 427" stroke="#f00" strokeWidth="3" />
          <path d="M1824 413.500L1818 437L1811.500 429.500L1801.500 427Z" fill="#f00" stroke="#9b0000" strokeWidth="0.5" />
        </g>
      </PointerLayer>
    </Panel>
  );
}

const railItems: [string, string][] = [
  ["cursor", "选择"],
  ["sliders", "属性"],
  ["convert", "转换"],
  ["chartImg", "图表"],
  ["wand", "美化"],
  ["book", "查找"],
  ["help", "帮助"],
  ["more", "更多"],
];

const menus: [string, ("green" | "current")?][] = [
  ["绘图工具", "green"],
  ["图表工具", "current"],
  ["方方格子"],
  ["DIY工具箱"],
];

export default function App() {
  return (
    <App_>
      <Global />
      <TitleBar>
        <DocTab $w={120}>
          <svg width="16" height="12" viewBox="0 0 16 12" aria-hidden="true">
            <path d="M0 0.500h3.500L5.500 8 8 2.500 10.500 8l2-7.500H16L12 11.500H9.500L8 8 6.500 11.500H4z" fill="#f0302a" />
            <path d="M4.500 0.500h8l-.8 2.500H5.200z" fill="#f8632f" />
            <path d="M7 3.200h2L8 6z" fill="#e0dad9" />
          </svg>
          WPS Office
        </DocTab>
        <DocTab $w={132}>
          <svg width="16" height="16" viewBox="0 0 16 16" aria-hidden="true">
            <path d="M1 0h6.500c5 0 8 3 8 8s-3 8-8 8H1z" fill="#ee5252" />
            <path d="M1 0h4v16H1z" fill="#f58a86" />
            <path d="M7.500 13C4.500 12 4 9 4.800 7c1 .8 1.800 1.800 2 3C7 7 8.500 4 11 3c2 4.500 0 9-3.500 10z" fill="#fff" />
          </svg>
          找稻壳模板
        </DocTab>
        <DocTab $w={240} $active>
          <svg width="16" height="16" viewBox="0 0 16 16" aria-hidden="true">
            <rect width="16" height="16" rx="2" fill="#149b6d" />
            <path d="M11 13h5v3H9z" fill="#077a52" />
            <path d="M10.700 4.200C9 3 5.600 3.200 5.600 5.300c0 2.400 4.900 1.800 4.900 4.200 0 2-3.600 2.300-5.300 1" fill="none" stroke="#fff" strokeWidth="1.700" />
          </svg>
          工作簿数量.xlsx
          <Dot />
        </DocTab>
        <IconButton $w={28} aria-label="新建标签"><Icon name="plus" size={18} /></IconButton>
        <IconButton $w={6} aria-label="标签列表"><Icon name="smallDown" size={20} /></IconButton>
        <Spacer />
        <WindowTools>
          <IconButton $w={32} aria-label="窗口"><Icon name="windows" size={18} /></IconButton>
          <IconButton $w={32} aria-label="应用"><Icon name="cube" /></IconButton>
          <IconButton $w={36} aria-label="账号">
            <svg width="20" height="20" viewBox="0 0 20 20" aria-hidden="true">
              <circle cx="10" cy="10" r="10" fill="#cfdbe3" />
              <path d="M8 8c0-4 6-6 8-2 1 3 1 6 0 9l-3-2-1-3-3 2z" fill="#3a2e33" />
              <circle cx="10.500" cy="7.500" r="2.200" fill="#e8c3b4" />
              <path d="M5 19c0-5 2-7 5-8 3 1 4 4 4 8z" fill="#e2ecf2" />
            </svg>
          </IconButton>
          <IconButton $w={44} aria-label="最小化"><Icon name="minus" /></IconButton>
          <IconButton $w={38} aria-label="还原"><Icon name="restore" size={18} /></IconButton>
          <IconButton $w={41} aria-label="关闭窗口"><Icon name="close" size={18} /></IconButton>
        </WindowTools>
      </TitleBar>

      <MenuRow>
        <FileButton><Icon name="burger" size={17} />文件</FileButton>
        <Rule />
        <QuickTools>
          {["save", "pdf", "print", "preview", "undo", "redo", "menuDown"].map((n) => (
            <IconButton key={n} $faint={n === "redo"} aria-label={n}><Icon name={n} size={18} /></IconButton>
          ))}
        </QuickTools>
        <Rule />
        <MenuItems $end={21}>
          {["开始", "插入", "页面", "公式", "数据", "审阅", "视图", "工具", "会员专享", "效率"].map((m) => (
            <MenuItem key={m}>{m}</MenuItem>
          ))}
        </MenuItems>
        <Rule />
        <MenuItems $end={28}>
          {menus.map(([m, tone]) => <MenuItem key={m} $tone={tone}>{m}</MenuItem>)}
        </MenuItems>
        <Rule />
        <IconButton $w={38} aria-label="搜索"><Icon name="search" /></IconButton>
        <Spacer />
        <Unsaved><Icon name="cloud" size={18} />有修改</Unsaved>
        <ShareButton><Icon name="share" size={17} />分享</ShareButton>
      </MenuRow>

      <Ribbon>
        <Group $gap={10} $pad="0 11px 0 15px">
          <BigButton><Icon name="addElement" size={24} box={24} /><WithArrow>添加元素<Caret /></WithArrow></BigButton>
          <BigButton><Icon name="quickLayout" size={24} box={24} /><WithArrow>快速布局<Caret /></WithArrow></BigButton>
        </Group>
        <Group $pad="0 13px 0 12px">
          <Gallery>
            {[0, 1, 2, 3].map((k) => (
              <ThumbButton key={k} $active={k === 0} aria-label={`样式${k + 1}`}><Thumb kind={k} /></ThumbButton>
            ))}
            <IconButton $w={10} aria-label="更多样式">
              <svg width="8" height="8" aria-hidden="true"><path d="M1 1h6M1.500 3.500h5L4 6.500z" stroke="#444" fill="#444" /></svg>
            </IconButton>
          </Gallery>
          <BigButton><Icon name="changeType" size={24} box={24} />更改类型</BigButton>
        </Group>
        <Group>
          <BigButton><Icon name="swap" size={24} box={24} />切换行列</BigButton>
          <BigButton><Icon name="selectData" size={24} box={24} />选择数据</BigButton>
        </Group>
        <Group>
          <BigButton><Icon name="moveChart" size={24} box={24} />移动图表</BigButton>
        </Group>
        <Group $pad="0 8px">
          <SeriesTools>
            <SelectBox>
              <SeriesSelect aria-label="图表元素" defaultValue="s2"><option value="s2">系列"数量2"</option></SeriesSelect>
              <Icon name="down" />
            </SelectBox>
            <SmallTools>
              <SmallTool><Icon name="setFormat" size={18} box={20} />设置格式</SmallTool>
              <SmallTool><Icon name="resetStyle" size={18} box={20} />重置样式</SmallTool>
            </SmallTools>
          </SeriesTools>
        </Group>
      </Ribbon>

      <Workspace>
        <SheetColumn>
          <FormulaRow>
            <NameBox>
              <NameInput aria-label="名称框" defaultValue="图表 1" />
              <Icon name="down" />
            </NameBox>
            <FormulaBox>
              <IconButton $w={22} aria-label="查找函数"><Icon name="zoomOut" size={17} /></IconButton>
              <Fx>fx</Fx>
              <Rule $h={16} />
              <FormulaInput aria-label="编辑栏" defaultValue="产品" />
            </FormulaBox>
          </FormulaRow>
          <GridArea>
            <GridViewport>
              <Sheet>
                <colgroup>
                  <col width="55" />
                  {Array.from({ length: 14 }, (_, i) => <col key={i} width="115" />)}
                </colgroup>
                <thead>
                  <tr>
                    <CornerHead><svg width="9" height="9" aria-hidden="true"><path d="M9 0v9H0z" fill="#77787a" /></svg></CornerHead>
                    {columns.map((c) => <ColHead key={c} scope="col">{c}</ColHead>)}
                    <ColHead />
                  </tr>
                </thead>
                <tbody>
                  {Array.from({ length: 27 }, (_, r) => (
                    <tr key={r}>
                      <RowHead scope="row">{r + 1}</RowHead>
                      {Array.from({ length: 14 }, (_, c) => {
                        const v = table[r]?.[c];
                        return <Cell key={c} $num={typeof v === "number"}>{v}</Cell>;
                      })}
                    </tr>
                  ))}
                </tbody>
              </Sheet>
              <Ranges />
              <Chart />
              <ChartTools>
                {[["barsPanel", "图表元素"], ["brush", "图表样式"], ["funnel", "图表筛选器"], ["hexagon", "设置图表区域格式"]].map(([n, l]) => (
                  <ChartTool key={n} aria-label={l}><Icon name={n} size={16} /></ChartTool>
                ))}
              </ChartTools>
            </GridViewport>
            <VScroll>
              <VScrollHead />
              <Tick />
              <Arrow $dir="up" />
              <VThumb />
              <Arrow $dir="down" />
            </VScroll>
          </GridArea>
          <SheetBar>
            <SheetNav>
              {["first", "prev", "next", "last"].map((n) => (
                <IconButton key={n} $w={22} $faint aria-label={n}><Icon name={n} size={18} /></IconButton>
              ))}
            </SheetNav>
            <SheetTab>Sheet1</SheetTab>
            <IconButton $w={24} aria-label="新建工作表"><Icon name="plusSmall" /></IconButton>
            <Spacer />
            <HScroll>
              <Tick $vertical />
              <Arrow $dir="left" />
              <HThumb />
              <Arrow $dir="right" />
              <Tick $vertical />
            </HScroll>
          </SheetBar>
        </SheetColumn>
        <PropertyPanel />
        <Rail>
          <IconButton $w={32} $h={16} aria-label="收起"><Icon name="minusBold" /></IconButton>
          {railItems.map(([n, l]) => (
            <IconButton key={n} $w={32} $h={32} $active={n === "sliders"} $faint={n === "convert"} aria-label={l}>
              <Icon name={n} size={17} />
            </IconButton>
          ))}
        </Rail>
      </Workspace>

      <StatusBar>
        <IconButton $w={24} $h={22} aria-label="宏"><Icon name="vb" size={16} /></IconButton>
        <Spacer />
        <StatusGroup $gap={12} $pad={0}>
          <IconButton $w={24} $h={22} aria-label="护眼"><Icon name="eye" /></IconButton>
          <IconButton $w={32} $h={22} aria-label="阅读模式"><Icon name="pan" size={18} /><Caret /></IconButton>
          <Rule $h={14} />
        </StatusGroup>
        <StatusGroup $gap={8} $pad={8}>
          <IconButton $w={24} $h={22} $active aria-label="普通视图"><Icon name="sheetView" size={21} /></IconButton>
          <IconButton $w={24} $h={22} aria-label="分页预览"><Icon name="pageView" size={21} /></IconButton>
          <IconButton $w={24} $h={22} aria-label="页面布局"><Icon name="layoutView" size={20} /></IconButton>
          <Rule $h={14} />
        </StatusGroup>
        <StatusGroup $gap={12} $pad={15}>
          <ZoomBox>
            <ZoomSelect aria-label="缩放比例" defaultValue="160"><option value="160">160%</option></ZoomSelect>
            <Icon name="smallDown" />
          </ZoomBox>
          <IconButton $w={16} $h={22} aria-label="缩小"><Icon name="minusBold" size={18} /></IconButton>
          <ZoomRange type="range" min="0" max="100" defaultValue="60" aria-label="缩放" />
          <IconButton $w={16} $h={22} aria-label="放大"><Icon name="plusSmall" size={18} /></IconButton>
          <IconButton $w={24} $h={22} aria-label="全屏"><Icon name="full" size={20} /></IconButton>
        </StatusGroup>
      </StatusBar>

      <Watermark>
        <svg width="43" height="40" viewBox="0 0 46 42" aria-hidden="true">
          <defs>
            <linearGradient id="wmBlue" x1="0" y1="1" x2="1" y2="0">
              <stop offset="0" stopColor="#3f7fc4" />
              <stop offset="1" stopColor="#6cc4f2" />
            </linearGradient>
            <linearGradient id="wmGreen" x1="0" y1="1" x2="1" y2="0">
              <stop offset="0" stopColor="#d6dc5e" />
              <stop offset="1" stopColor="#3fb56f" />
            </linearGradient>
          </defs>
          <path d="M44 1C28 1 10 9 4 20c-4 8-1 15 8 16-6-5-5-12 1-19C20 9 32 5 44 1z" fill="url(#wmBlue)" />
          <path d="M40 3C28 8 15 17 14 26c0 3 3 4 6 3-2-8 8-16 20-26z" fill="#4f9bd6" />
          <path d="M24 19c6-6 20-5 19 4-1 8-14 15-36 17 14-4 26-10 27-15 1-4-4-6-10-6z" fill="url(#wmGreen)" />
          <path d="M19 27c1-4 7-7 11-5 2 2-1 6-6 7 1-2 1-4-5-2z" fill="#58b98a" />
        </svg>
        <WatermarkText>
          <p>极光下载站</p>
          <p>www.xz7.com</p>
        </WatermarkText>
      </Watermark>
    </App_>
  );
}
